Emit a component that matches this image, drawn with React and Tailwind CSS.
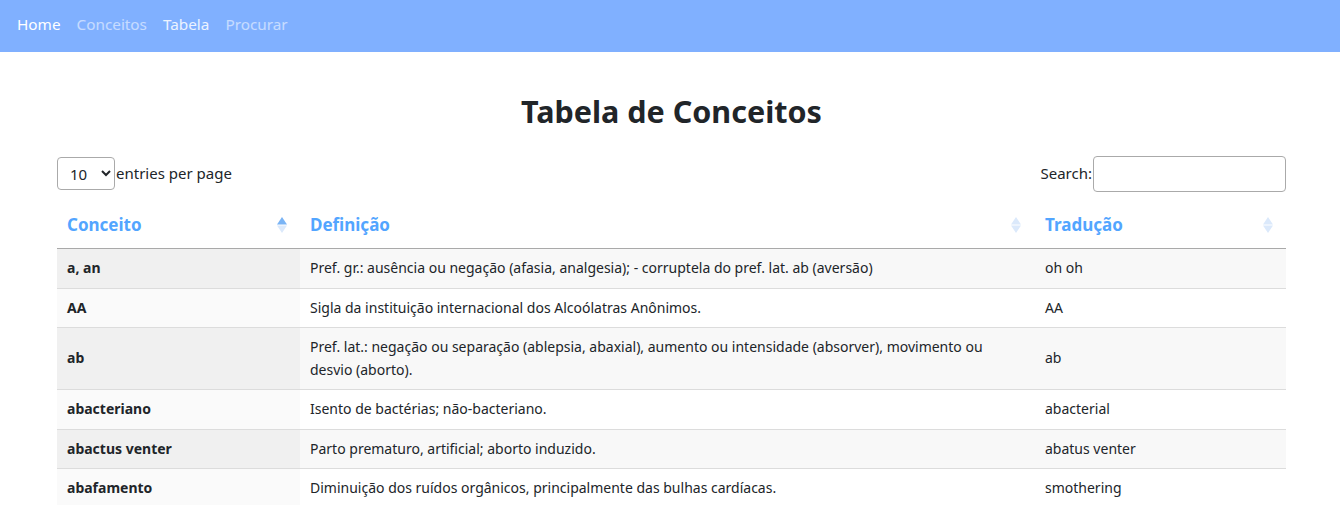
import { useState } from 'react';

const rows = [
  { conceito: 'a, an', definicao: 'Pref. gr.: ausência ou negação (afasia, analgesia); - corruptela do pref. lat. ab (aversão)', traducao: 'oh oh' },
  { conceito: 'AA', definicao: 'Sigla da instituição internacional dos Alcoólatras Anônimos.', traducao: 'AA' },
  { conceito: 'ab', definicao: 'Pref. lat.: negação ou separação (ablepsia, abaxial), aumento ou intensidade (absorver), movimento ou desvio (aborto).', traducao: 'ab' },
  { conceito: 'abacteriano', definicao: 'Isento de bactérias; não-bacteriano.', traducao: 'abacterial' },
  { conceito: 'abactus venter', definicao: 'Parto prematuro, artificial; aborto induzido.', traducao: 'abatus venter' },
  { conceito: 'abafamento', definicao: 'Diminuição dos ruídos orgânicos, principalmente das bulhas cardíacas.', traducao: 'smothering' },
];

// setas de ordenação do cabeçalho
function SortIcon({ active }) {
  return (
    <svg width="10" height="16" viewBox="0 0 10 16" className="shrink-0">
      <path d="M5 0 L10 7.5 L0 7.5 Z" fill={active ? '#7ab4f5' : '#dbe9fb'} />
      <path d="M5 16 L10 8.5 L0 8.5 Z" fill="#dbe9fb" />
    </svg>
  );
}

export default function App() {
  const [search, setSearch] = useState('');

  return (
    <div className="min-h-screen bg-white text-[#212529]" style={{ fontFamily: '"Noto Sans", "Open Sans", sans-serif' }}>
      {/* Navbar */}
      <nav className="h-[52px] bg-[#80b0ff] flex items-center px-[9px] pb-[3px] text-[15.3px]">
        <a className="px-2 text-white">Home</a>
        <a className="px-2 text-white/55">Conceitos</a>
        <a className="px-2 text-white/85">Tabela</a>
        <a className="px-2 text-white/55">Procurar</a>
      </nav>

      <div className="pl-[57px] pr-[54px]">
        <h1 className="text-center font-bold text-[30.5px] leading-none pt-[44px] pb-[29px]">Tabela de Conceitos</h1>

        {/* Controles */}
        <div className="flex items-center justify-between h-[36px]">
          <div className="flex items-center text-[15px]">
            <select className="h-[33px] w-[58px] border border-[#aaa] rounded px-2 text-[15px] bg-white">
              <option>10</option>
              <option>25</option>
              <option>50</option>
            </select>
            <span className="ml-[1px]">entries per page</span>
          </div>
          <div className="flex items-center text-[15px]">
            <span>Search:</span>
            <input
              value={search}
              onChange={(e) => setSearch(e.target.value)}
              className="ml-[1px] h-[36px] w-[193px] border border-[#aaa] rounded px-2"
            />
          </div>
        </div>

        {/* Tabela */}
        <table className="w-full mt-[14px] border-collapse text-[14px] leading-[22.5px]">
          <thead>
            <tr className="border-b border-[#a9a9a9] text-[#52a5ff] text-[17px]">
              <th className="w-[243px] h-[43px] pl-[10px] pr-[13px] pb-[3px] text-left font-bold">
                <div className="flex items-center justify-between">Conceito<SortIcon active /></div>
              </th>
              <th className="w-[735px] pl-[10px] pr-[14px] pb-[3px] text-left font-bold">
                <div className="flex items-center justify-between">Definição<SortIcon /></div>
              </th>
              <th className="pl-[10px] pr-[13px] pb-[3px] text-left font-bold">
                <div className="flex items-center justify-between">Tradução<SortIcon /></div>
              </th>
            </tr>
          </thead>
          <tbody>
            {rows.map((r, i) => (
              <tr key={r.conceito} className={`border-b border-[#dcdcdc] ${i % 2 === 0 ? 'bg-[#f8f8f8]' : 'bg-white'}`}>
                <td className={`px-[10px] py-2 font-bold ${i % 2 === 0 ? 'bg-[#f0f0f0]' : 'bg-[#fafafa]'}`}>{r.conceito}</td>
                <td className="px-[10px] py-2">{r.definicao}</td>
                <td className="px-[10px] py-2">{r.traducao}</td>
              </tr>
            ))}
          </tbody>
        </table>
      </div>
    </div>
  );
}
